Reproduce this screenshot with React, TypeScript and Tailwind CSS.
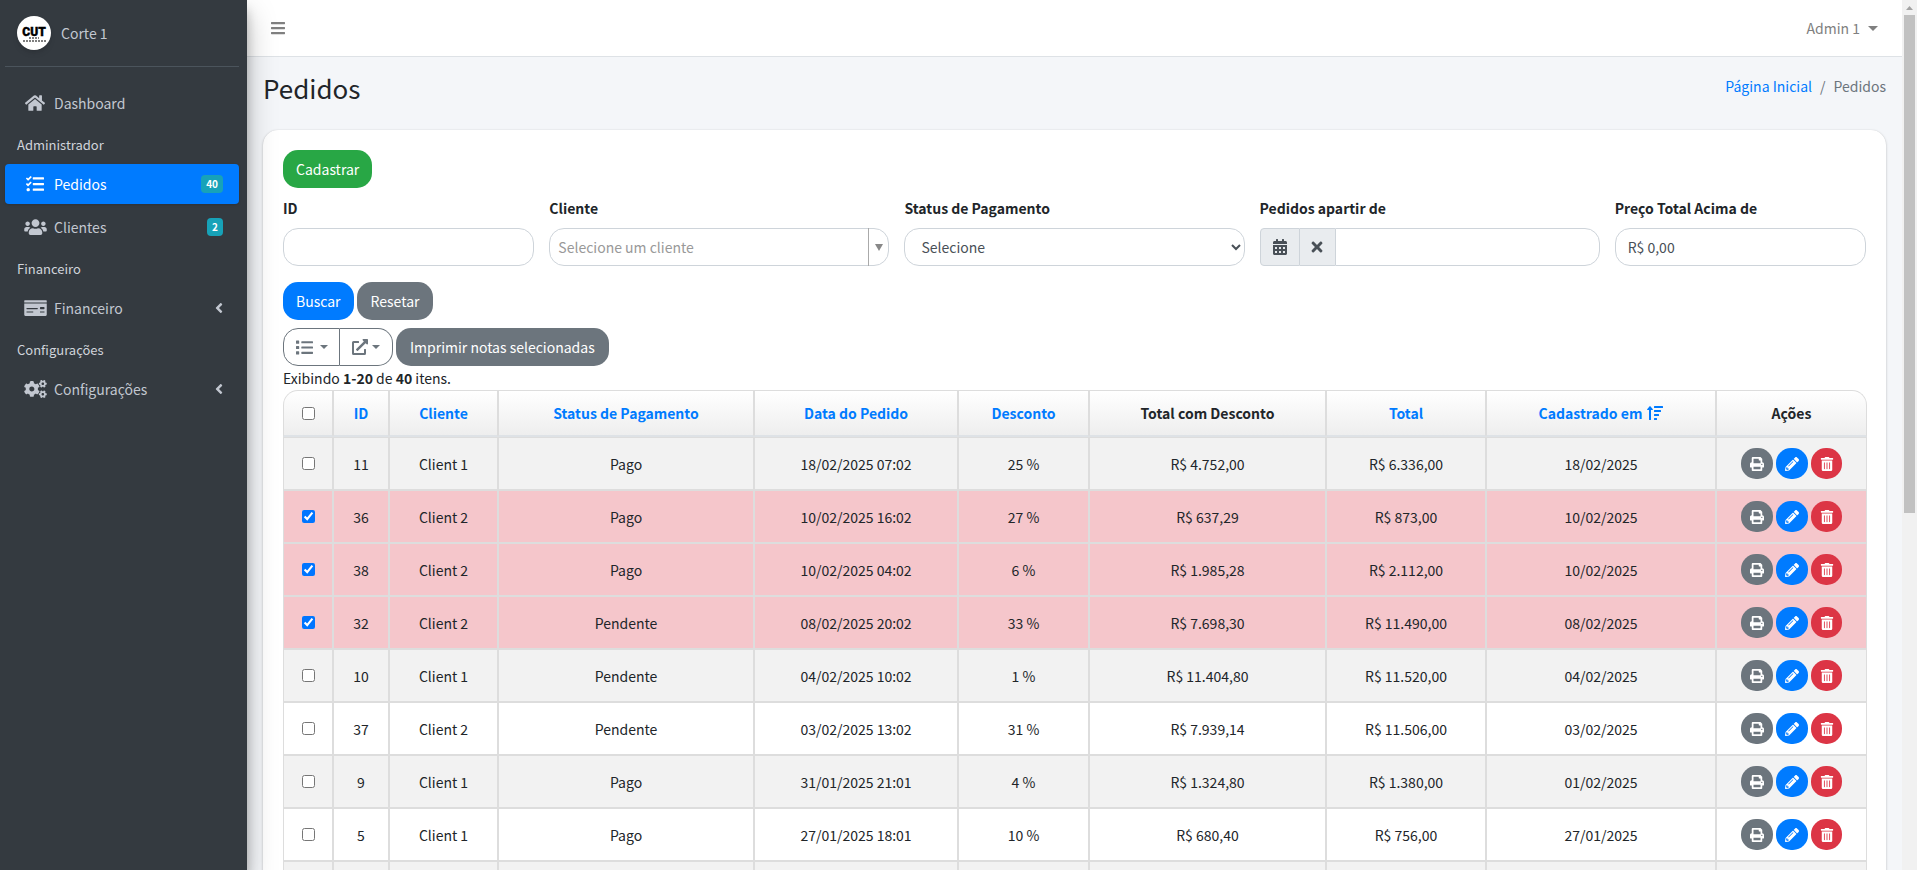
import type { ReactNode } from 'react';
import {
  FaAngleLeft,
  FaBars,
  FaCalendarAlt,
  FaCogs,
  FaExternalLinkAlt,
  FaHome,
  FaList,
  FaMoneyCheck,
  FaPencilAlt,
  FaPrint,
  FaSortAmountUp,
  FaTasks,
  FaTimes,
  FaTrashAlt,
  FaUsers,
} from 'react-icons/fa';

const pedidos = [
  { id: 11, cliente: 'Client 1', status: 'Pago', data: '18/02/2025 07:02', desconto: '25 %', totalDesconto: 'R$ 4.752,00', total: 'R$ 6.336,00', cadastro: '18/02/2025', marcado: false },
  { id: 36, cliente: 'Client 2', status: 'Pago', data: '10/02/2025 16:02', desconto: '27 %', totalDesconto: 'R$ 637,29', total: 'R$ 873,00', cadastro: '10/02/2025', marcado: true },
  { id: 38, cliente: 'Client 2', status: 'Pago', data: '10/02/2025 04:02', desconto: '6 %', totalDesconto: 'R$ 1.985,28', total: 'R$ 2.112,00', cadastro: '10/02/2025', marcado: true },
  { id: 32, cliente: 'Client 2', status: 'Pendente', data: '08/02/2025 20:02', desconto: '33 %', totalDesconto: 'R$ 7.698,30', total: 'R$ 11.490,00', cadastro: '08/02/2025', marcado: true },
  { id: 10, cliente: 'Client 1', status: 'Pendente', data: '04/02/2025 10:02', desconto: '1 %', totalDesconto: 'R$ 11.404,80', total: 'R$ 11.520,00', cadastro: '04/02/2025', marcado: false },
  { id: 37, cliente: 'Client 2', status: 'Pendente', data: '03/02/2025 13:02', desconto: '31 %', totalDesconto: 'R$ 7.939,14', total: 'R$ 11.506,00', cadastro: '03/02/2025', marcado: false },
  { id: 9, cliente: 'Client 1', status: 'Pago', data: '31/01/2025 21:01', desconto: '4 %', totalDesconto: 'R$ 1.324,80', total: 'R$ 1.380,00', cadastro: '01/02/2025', marcado: false },
  { id: 5, cliente: 'Client 1', status: 'Pago', data: '27/01/2025 18:01', desconto: '10 %', totalDesconto: 'R$ 680,40', total: 'R$ 756,00', cadastro: '27/01/2025', marcado: false },
];

const inputClass = 'h-[38px] w-full rounded-[15px] border border-[#ced4da] bg-white px-3 text-[#495057]';

function Caret({ className }: { className: string }) {
  return (
    <svg viewBox="0 0 10 5" className={className} aria-hidden="true">
      <path d="M0 0h10L5 5z" fill="currentColor" />
    </svg>
  );
}

function MenuItem({ icon, label, badge, active, tree }: { icon: ReactNode; label: string; badge?: number; active?: boolean; tree?: boolean }) {
  return (
    <li className="mb-[3px]">
      <a
        href="#"
        className={
          active
            ? 'flex h-10 items-center rounded bg-[#007bff] px-4 text-white shadow'
            : 'flex h-10 items-center rounded px-4 text-[#c2c7d0]'
        }
      >
        <span className="flex w-7 justify-center">{icon}</span>
        <span className="ml-[5px] flex-1">{label}</span>
        {badge && <span className="rounded bg-[#17a2b8] px-[5px] text-[10px] leading-[18px] font-bold text-white">{badge}</span>}
        {tree && <FaAngleLeft className="h-4 w-2" />}
      </a>
    </li>
  );
}

function MenuHeader({ children }: { children: ReactNode }) {
  return <li className="flex h-[38px] items-center px-3 text-[13px] text-[#d0d4db]">{children}</li>;
}

function Sidebar() {
  return (
    <aside className="z-10 w-[247px] shrink-0 bg-[#343a40] px-[5px] shadow-[0_14px_28px_rgba(0,0,0,0.25),0_10px_10px_rgba(0,0,0,0.22)]">
      <a href="#" className="mr-[3px] flex h-[67px] items-center border-b border-[#4b545c] px-3 text-[#c2c7d0]">
        <svg viewBox="0 0 34 34" className="size-[34px] rounded-full bg-white shadow-md" aria-hidden="true">
          <text x="17" y="20" textAnchor="middle" fontFamily="Roboto, sans-serif" fontWeight="900" fontSize="12" fill="#000" stroke="#000" strokeWidth="0.4">
            CUT
          </text>
          <path d="M12 22H22M6 25H29" stroke="#555" strokeWidth="1.500" strokeDasharray="2 1" />
        </svg>
        <span className="ml-[10px]">Corte 1</span>
      </a>
      <nav className="mt-4 mr-[3px]">
        <ul>
          <MenuItem icon={<FaHome className="h-[18px] w-5" />} label="Dashboard" />
          <MenuHeader>Administrador</MenuHeader>
          <MenuItem icon={<FaTasks className="size-[18px]" />} label="Pedidos" badge={40} active />
          <MenuItem icon={<FaUsers className="h-[18px] w-[23px]" />} label="Clientes" badge={2} />
          <MenuHeader>Financeiro</MenuHeader>
          <MenuItem icon={<FaMoneyCheck className="h-[18px] w-[23px]" />} label="Financeiro" tree />
          <MenuHeader>Configurações</MenuHeader>
          <MenuItem icon={<FaCogs className="h-[18px] w-[23px]" />} label="Configurações" tree />
        </ul>
      </nav>
    </aside>
  );
}

function Topbar() {
  return (
    <header className="flex h-[57px] items-center justify-between border-b border-[#dee2e6] bg-white px-6 text-[#808080]">
      <button type="button" aria-label="Menu">
        <FaBars className="h-4 w-[14px]" />
      </button>
      <button type="button" className="flex items-center gap-2">
        Admin 1
        <Caret className="h-[5px] w-[10px]" />
      </button>
    </header>
  );
}

function Filtros() {
  return (
    <form>
      <div className="grid grid-cols-[repeat(18,minmax(0,1fr))] gap-x-[15px]">
        <div className="col-span-3">
          <label htmlFor="id" className="mb-2 block leading-6 font-bold">ID</label>
          <input id="id" type="text" className={inputClass} />
        </div>
        <div className="col-span-4">
          <label htmlFor="cliente" className="mb-2 block leading-6 font-bold">Cliente</label>
          <div className="relative">
            <select id="cliente" className="h-[38px] w-full appearance-none rounded-[15px] border border-[#ced4da] bg-white px-2 text-[#999]">
              <option>Selecione um cliente</option>
            </select>
            <span className="pointer-events-none absolute inset-y-0 right-0 flex w-[21px] items-center justify-center border-l border-[#aaa] text-[#888]">
              <svg viewBox="0 0 8 7" className="h-[7px] w-2" aria-hidden="true">
                <path d="M0 0h8L4 7z" fill="currentColor" />
              </svg>
            </span>
          </div>
        </div>
        <div className="col-span-4">
          <label htmlFor="status" className="mb-2 block leading-6 font-bold">Status de Pagamento</label>
          <select id="status" className={inputClass}>
            <option>Selecione</option>
          </select>
        </div>
        <div className="col-span-4">
          <label htmlFor="data" className="mb-2 block leading-6 font-bold">Pedidos apartir de</label>
          <div className="flex h-[38px] text-[#495057]">
            <button type="button" aria-label="Abrir calendário" className="flex w-10 items-center justify-center rounded-l border border-[#ced4da] bg-[#e9ecef]">
              <FaCalendarAlt size={16} />
            </button>
            <button type="button" aria-label="Limpar data" className="flex w-[35px] items-center justify-center border-y border-[#ced4da] bg-[#e9ecef]">
              <FaTimes size={16} />
            </button>
            <input id="data" type="text" className="min-w-0 flex-1 rounded-r-[15px] border border-[#ced4da] px-3" />
          </div>
        </div>
        <div className="col-span-3">
          <label htmlFor="preco" className="mb-2 block leading-6 font-bold">Preço Total Acima de</label>
          <input id="preco" type="text" defaultValue="R$ 0,00" className={inputClass} />
        </div>
      </div>
      <div className="mt-4 flex gap-[3px]">
        <button type="submit" className="h-[38px] rounded-[15px] bg-[#007bff] px-[13px] text-white">Buscar</button>
        <button type="reset" className="h-[38px] rounded-[15px] bg-[#6c757d] px-[14px] text-white">Resetar</button>
      </div>
    </form>
  );
}

function Tabela() {
  return (
    <table className="w-full table-fixed border-separate border-spacing-0 text-center [&_td]:border [&_td]:border-[#ddd] [&_th]:border [&_th]:border-b-2 [&_th]:border-[#ddd] [&_th]:border-b-[#dee2e6]">
      <colgroup>
        <col className="w-[50px]" />
        <col className="w-[56px]" />
        <col className="w-[109px]" />
        <col className="w-[256px]" />
        <col className="w-[204px]" />
        <col className="w-[131px]" />
        <col className="w-[237px]" />
        <col className="w-[160px]" />
        <col className="w-[230px]" />
        <col className="w-[151px]" />
      </colgroup>
      <thead>
        <tr className="h-[47px] text-[#007bff] [&_th]:bg-linear-to-b [&_th]:from-white [&_th]:to-[#eee]">
          <th className="rounded-tl-[15px]">
            <input type="checkbox" aria-label="Selecionar todos" className="mx-auto block size-[13px]" />
          </th>
          <th><a href="#">ID</a></th>
          <th><a href="#">Cliente</a></th>
          <th><a href="#">Status de Pagamento</a></th>
          <th><a href="#">Data do Pedido</a></th>
          <th><a href="#">Desconto</a></th>
          <th className="text-[#212529]">Total com Desconto</th>
          <th><a href="#">Total</a></th>
          <th>
            <a href="#" className="inline-flex items-center gap-[5px]">
              Cadastrado em
              <FaSortAmountUp size={16} />
            </a>
          </th>
          <th className="rounded-tr-[15px] text-[#212529]">Ações</th>
        </tr>
      </thead>
      <tbody>
        {pedidos.map(pedido => (
          <tr key={pedido.id} className={pedido.marcado ? 'h-[53px] bg-[#f5c6cb]' : 'h-[53px] odd:bg-[#f2f2f2]'}>
            <td>
              <input
                type="checkbox"
                defaultChecked={pedido.marcado}
                aria-label={`Selecionar pedido ${pedido.id}`}
                className="mx-auto block size-[13px] accent-[#0075ff]"
              />
            </td>
            <td>{pedido.id}</td>
            <td>{pedido.cliente}</td>
            <td>{pedido.status}</td>
            <td>{pedido.data}</td>
            <td>{pedido.desconto}</td>
            <td>{pedido.totalDesconto}</td>
            <td>{pedido.total}</td>
            <td>{pedido.cadastro}</td>
            <td>
              <div className="flex justify-center gap-[3px] text-white">
                <button type="button" aria-label="Imprimir" className="flex h-[31px] w-8 items-center justify-center rounded-[15px] bg-[#6c757d]">
                  <FaPrint size={14} />
                </button>
                <button type="button" aria-label="Editar" className="flex h-[31px] w-8 items-center justify-center rounded-[15px] bg-[#007bff]">
                  <FaPencilAlt size={14} />
                </button>
                <button type="button" aria-label="Excluir" className="flex h-[31px] w-[31px] items-center justify-center rounded-[15px] bg-[#dc3545]">
                  <FaTrashAlt size={14} />
                </button>
              </div>
            </td>
          </tr>
        ))}
        <tr className="h-[53px] bg-[#f2f2f2]">
          {Array.from({ length: 10 }, (_, i) => (
            <td key={i} />
          ))}
        </tr>
      </tbody>
    </table>
  );
}

export default function App() {
  return (
    <div className="flex h-screen overflow-hidden bg-[#f4f6f9] font-['Noto_Sans_CJK_SC','Noto_Sans',sans-serif] text-sm text-[#212529]">
      <Sidebar />
      <div className="min-w-0 flex-1">
        <Topbar />
        <div className="flex items-start justify-between px-4 pt-[14px]">
          <h1 className="text-[26px] leading-[34px]">Pedidos</h1>
          <nav className="flex gap-2 leading-[30px] text-[#6c757d]">
            <a href="#" className="text-[#007bff]">Página Inicial</a>
            <span>/</span>
            <span>Pedidos</span>
          </nav>
        </div>
        <main className="mx-4 mt-[25px] rounded-[15px] bg-white p-5 shadow-[0_0_1px_rgba(0,0,0,0.125),0_1px_3px_rgba(0,0,0,0.2)]">
          <button type="button" className="mb-2 block h-[38px] rounded-[15px] bg-[#28a745] px-[13px] text-white">Cadastrar</button>
          <Filtros />
          <div className="mt-2 flex gap-[3px]">
            <div className="flex h-[38px] text-[#6c757d]">
              <button type="button" aria-label="Colunas" className="flex w-[57px] items-center justify-center gap-[7px] rounded-l-[15px] border border-[#6c757d]">
                <FaList size={17} />
                <Caret className="h-1 w-2" />
              </button>
              <button type="button" aria-label="Exportar" className="flex w-[53px] items-center justify-center gap-1 rounded-r-[15px] border border-l-0 border-[#6c757d]">
                <FaExternalLinkAlt size={16} />
                <Caret className="h-1 w-2" />
              </button>
            </div>
            <button type="button" className="h-[38px] rounded-[15px] bg-[#6c757d] px-[14px] text-white">Imprimir notas selecionadas</button>
          </div>
          <p className="leading-6">
            Exibindo <b>1-20</b> de <b>40</b> itens.
          </p>
          <Tabela />
        </main>
      </div>
      <div className="flex w-[15px] shrink-0 flex-col items-center bg-[#f1f1f1]" aria-hidden="true">
        <svg viewBox="0 0 15 15" className="size-[15px]">
          <path d="M4 10h7L7.500 6z" fill="#a3a3a3" />
        </svg>
        <div className="h-[498px] w-[11px] bg-[#c1c1c1]" />
      </div>
    </div>
  );
}
